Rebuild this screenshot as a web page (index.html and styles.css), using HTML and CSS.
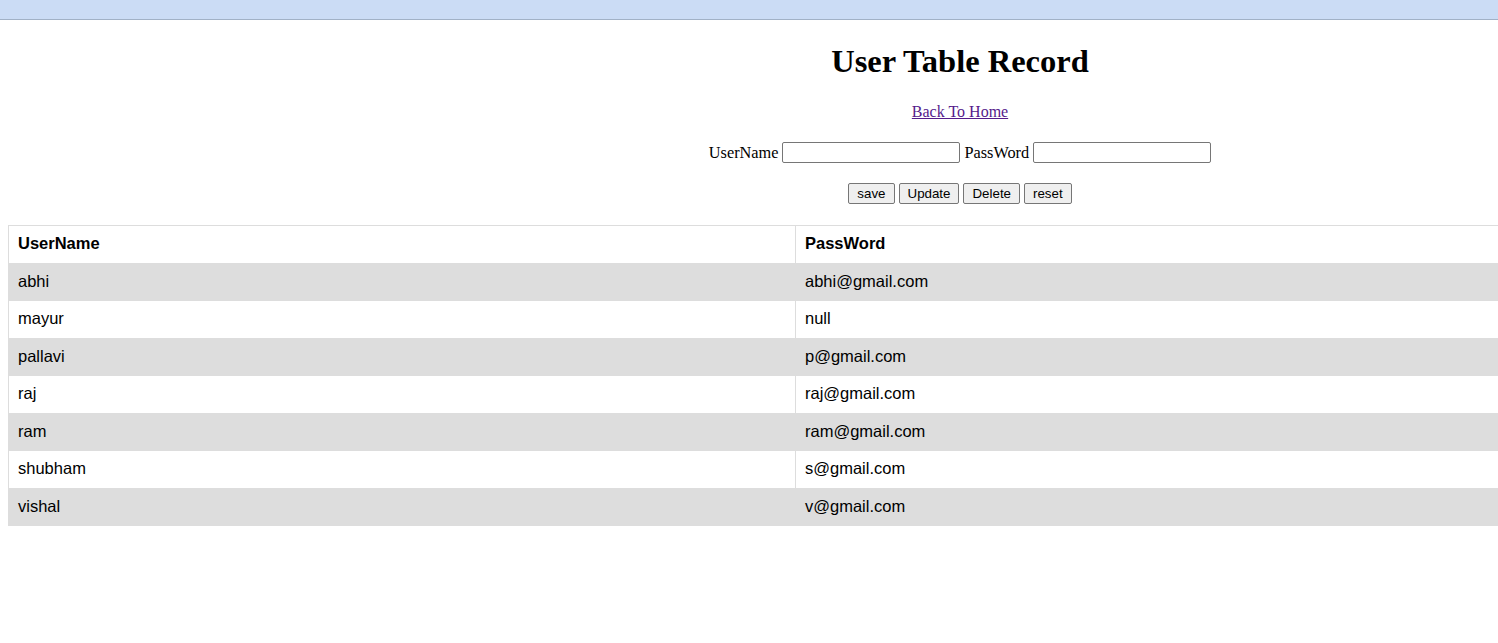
FILE: index.html
```html
<!DOCTYPE html>
<html>
<head>
<meta charset="utf-8">
<title>User Table Record</title>
<link rel="stylesheet" href="styles.css">
</head>
<body>
<div class="topbar"></div>
<div class="page">
  <h1 class="title">User Table Record</h1>
  <div class="back"><a href="#" class="back-link">Back To Home</a></div>
  <form class="form-row">
    <label class="field-label">UserName</label>
    <input type="text" class="field-input">
    <label class="field-label">PassWord</label>
    <input type="password" class="field-input">
  </form>
  <div class="button-row">
    <button class="btn">save</button>
    <button class="btn">Update</button>
    <button class="btn">Delete</button>
    <button class="btn">reset</button>
  </div>
  <table class="records">
    <tr><th class="col-user">UserName</th><th>PassWord</th></tr>
    <tr><td>abhi</td><td>abhi@gmail.com</td></tr>
    <tr><td>mayur</td><td>null</td></tr>
    <tr><td>pallavi</td><td>p@gmail.com</td></tr>
    <tr><td>raj</td><td>raj@gmail.com</td></tr>
    <tr><td>ram</td><td>ram@gmail.com</td></tr>
    <tr><td>shubham</td><td>s@gmail.com</td></tr>
    <tr><td>vishal</td><td>v@gmail.com</td></tr>
  </table>
</div>
</body>
</html>
```

FILE: styles.css
```css
html {
  overflow: hidden;
  background: #ffffff;
}
body {
  margin: 0;
  width: 1920px;
  font-family: "Liberation Serif", "Times New Roman", serif;
  font-size: 16px;
  color: #000;
}
.topbar {
  height: 19px;
  background: #cbdcf5;
  border-bottom: 1px solid #a1b1c6;
}
.page {
  margin: 0 8px;
}
.title {
  margin: 23px 0 0;
  font-size: 32.5px;
  line-height: 37px;
  font-weight: bold;
  text-align: center;
}
.back {
  margin-top: 23px;
  line-height: 18px;
  text-align: center;
}
.back-link {
  color: #551a8b;
  text-decoration: underline;
}
.form-row {
  margin: 21px 0 0;
  height: 21px;
  display: flex;
  justify-content: center;
  align-items: center;
  gap: 4px;
}
.field-label {
  line-height: 18px;
  font-size: 16.3px;
}
.field-input {
  box-sizing: border-box;
  width: 178px;
  height: 21px;
  border: 1px solid #767676;
  border-radius: 2px;
  padding: 1px 2px;
  font-family: "Liberation Sans", Arial, sans-serif;
  font-size: 13.33px;
  background: #fff;
}
.button-row {
  margin-top: 20px;
  height: 21px;
  display: flex;
  justify-content: center;
  gap: 4px;
}
.btn {
  box-sizing: border-box;
  height: 21px;
  padding: 1px 8px;
  border: 1px solid #767676;
  border-radius: 2px;
  background: #efefef;
  color: #000;
  font-family: "Liberation Sans", Arial, sans-serif;
  font-size: 13.33px;
  line-height: 17px;
}
.records {
  margin-top: 21px;
  width: 100%;
  border-collapse: collapse;
  font-family: "Liberation Sans", Arial, sans-serif;
  font-size: 16.5px;
}
.records th,
.records td {
  border: 1px solid #dddddd;
  text-align: left;
  padding: 8px 8px 10px 9px;
  line-height: 18.5px;
}
.records th {
  font-weight: bold;
}
.col-user {
  width: 769px;
}
.records tr:nth-child(even) {
  background: #dddddd;
}
```
